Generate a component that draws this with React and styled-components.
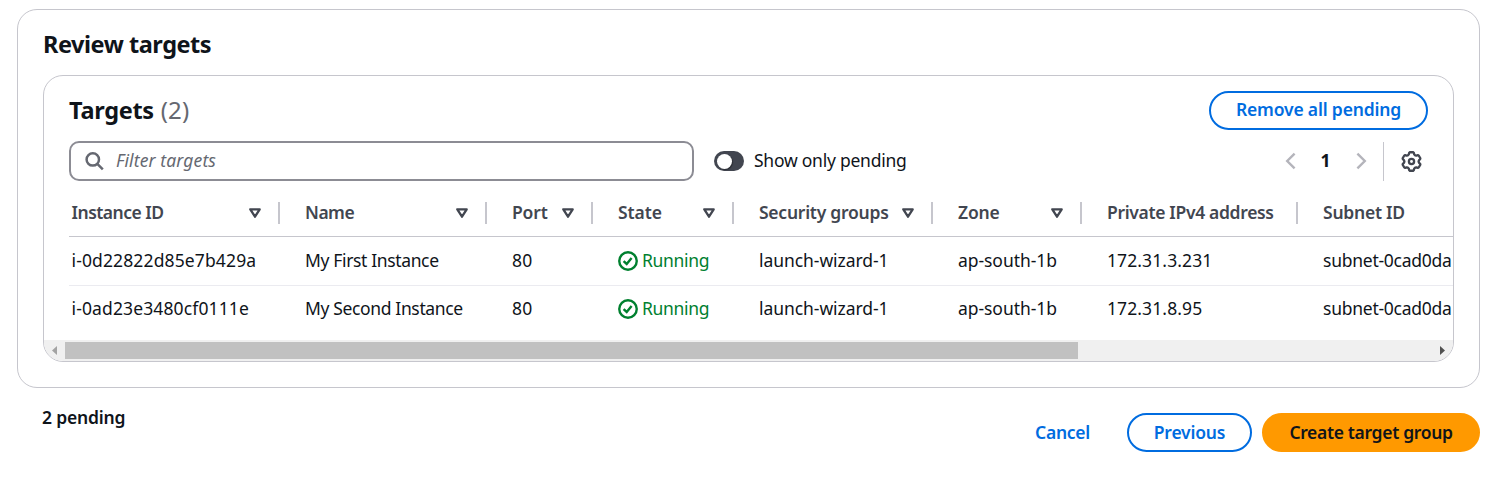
import React from "react";
import styled, { createGlobalStyle } from "styled-components";

const GlobalStyle = createGlobalStyle`
  * { box-sizing: border-box; }
  body {
    margin: 0;
    background: #fff;
    color: #0f141a;
    font: 400 17.5px/25px "Noto Sans", sans-serif;
    overflow: hidden;
  }
  button { font-family: inherit; cursor: pointer; }
`;

const Page = styled.main`
  padding: 9px 16px 0 17px;
`;

const Text = styled.span`
  letter-spacing: ${(p) => p.$tracking || 0}px;
  white-space: nowrap;
`;

const Container = styled.section`
  height: 379px;
  padding: 19px 25px 0;
  border: 1px solid #c6c6cd;
  border-radius: 20px;
`;

const Heading = styled.h2`
  margin: 0;
  font-size: 23.5px;
  font-weight: 700;
  line-height: 30px;
  letter-spacing: ${(p) => p.$tracking}px;
`;

const Panel = styled.div`
  display: flex;
  flex-direction: column;
  height: 287px;
  margin-top: 16px;
  border: 1px solid #c6c6cd;
  border-radius: 20px;
  overflow: hidden;
`;

const PanelHeader = styled.header`
  display: flex;
  align-items: center;
  justify-content: space-between;
  height: 39px;
  margin: 15px 25px 0;
  ${Heading} { padding-bottom: 2px; }
`;

const Counter = styled.span`
  margin-left: 7px;
  color: #656871;
  font-size: 24px;
  font-weight: 400;
  letter-spacing: 0.1px;
`;

const Button = styled.button`
  width: ${(p) => p.$width}px;
  height: 39px;
  padding: 0 0 ${(p) => (p.$primary || p.$low ? 0 : 2)}px;
  border: 2px solid ${(p) => (p.$primary ? "#ff9900" : "#006ce0")};
  border-radius: 20px;
  background: ${(p) => (p.$primary ? "#ff9900" : "#fff")};
  color: ${(p) => (p.$primary ? "#0f141a" : "#006ce0")};
  font-size: 17.5px;
  font-weight: 600;
  line-height: 25px;
`;

const LinkButton = styled.button`
  padding: 0 27px;
  border: 0;
  background: none;
  color: #006ce0;
  font-size: 17.5px;
  font-weight: 600;
  line-height: 25px;
`;

const Tools = styled.div`
  display: flex;
  align-items: center;
  height: 40px;
  margin: 11px 25px 0;
`;

const Search = styled.label`
  display: flex;
  align-items: center;
  gap: 11px;
  width: 625px;
  height: 40px;
  padding-left: 14px;
  border: 2px solid #8c8c94;
  border-radius: 10px;
  color: #656871;
  font-style: italic;
  ${Text} { padding-bottom: 1px; }
`;

const ToggleField = styled.label`
  display: flex;
  align-items: center;
  gap: 10px;
  margin-left: 20px;
  ${Text} { padding-bottom: 2px; }
`;

const Switch = styled.span`
  width: 30px;
  height: 20px;
  padding: 2.5px;
  border-radius: 10px;
  background: #424650;
`;

const Knob = styled.span`
  display: block;
  width: 15px;
  height: 15px;
  border-radius: 50%;
  background: #fff;
  box-shadow: 1px 1px 1px rgba(0, 0, 0, 0.35);
`;

const Pagination = styled.nav`
  display: flex;
  align-items: center;
  justify-content: space-between;
  width: 82px;
  margin-left: auto;
  font-weight: 700;
  color: #b4b4bb;
`;

const CurrentPage = styled.span`
  padding: 0 1px 1px 0;
  color: #0f141a;
`;

const Preferences = styled.div`
  display: flex;
  align-items: center;
  justify-content: flex-end;
  width: 45px;
  height: 39px;
  margin-left: 16px;
  padding-right: 6px;
  border-left: 1px solid #c6c6cd;
  color: #424650;
`;

const Table = styled.div`
  flex: 1;
  margin: 8px 0 0 25px;
`;

const Row = styled.div`
  display: grid;
  grid-template-columns: 211px 207px 106px 141px 199px 149px 216px 156px;
  align-items: center;
  height: ${(p) => p.$height}px;
  border-bottom: 1px solid ${(p) => p.$line || "transparent"};
`;

const Cell = styled.div`
  display: flex;
  align-items: center;
  gap: 5px;
  padding-left: 25px;
  overflow: hidden;
  ${Text} { padding-bottom: 1px; }
  &:first-child { padding-left: 2.5px; }
  &:last-child { margin-right: 2px; }
`;

const HeaderCell = styled(Cell)`
  justify-content: space-between;
  height: 22px;
  padding-right: 17px;
  border-right: 2px solid #c6c6cd;
  color: #424650;
  font-weight: 600;
  ${Text} { padding-bottom: 0; }
  &:last-child { border-right: 0; }
`;

const Status = styled.span`
  display: flex;
  align-items: center;
  gap: 4px;
  color: #00802f;
`;

const ScrollTrack = styled.div`
  display: flex;
  align-items: center;
  height: 21px;
  background: #f0f0f0;
`;

const ScrollArrow = styled.svg`
  width: 21px;
  height: 21px;
  fill: ${(p) => (p.$dim ? "#a3a3a3" : "#505050")};
`;

const ScrollThumb = styled.div`
  width: 1013px;
  height: 17px;
  margin-right: auto;
  background: #c1c1c1;
`;

const Footer = styled.footer`
  display: flex;
  justify-content: space-between;
  padding: 17px 0 0 25px;
`;

const Pending = styled.strong`
  font-weight: 600;
`;

const Actions = styled.div`
  display: flex;
  gap: 10px;
  padding-top: 8px;
`;

const SearchIcon = () => (
  <svg width="20" height="20" viewBox="0 0 20 20" fill="none" stroke="#656871" strokeWidth="2.5">
    <circle cx="7.8" cy="8.4" r="6.2" />
    <path d="M12.3 12.9 17.8 18.4" />
  </svg>
);

const SortIcon = () => (
  <svg width="12" height="10" viewBox="0 0 12 10" fill="none" stroke="#424650" strokeWidth="2.3" strokeLinejoin="round">
    <path d="M1.3 1.3h9.4L6 8.7Z" />
  </svg>
);

const ChevronIcon = ({ d }) => (
  <svg width="11" height="18" viewBox="0 0 11 18" fill="none" stroke="currentColor" strokeWidth="2.4">
    <path d={d} />
  </svg>
);

const CheckIcon = () => (
  <svg width="20" height="20" viewBox="0 0 20 20" fill="none" stroke="currentColor" strokeWidth="2.4">
    <circle cx="10" cy="10" r="8.75" />
    <path d="m5.6 10.1 3.1 2.9 4.9-5.9" />
  </svg>
);

// Six rounded teeth: each tooth is given by [angle offset, radius] pairs.
const tooth = [[-30, 7.1], [-20, 7.7], [-15, 9], [-10, 9.4], [10, 9.4], [15, 9], [20, 7.7]];
const gearOutline = [0, 60, 120, 180, 240, 300]
  .flatMap((base) =>
    tooth.map(([offset, radius]) => {
      const angle = ((base + offset - 90) * Math.PI) / 180;
      return `${(10.5 + radius * Math.cos(angle)).toFixed(2)},${(10.5 + radius * Math.sin(angle)).toFixed(2)}`;
    })
  )
  .join(" ");

const GearIcon = () => (
  <svg width="21" height="21" viewBox="0 0 21 21" fill="none" stroke="currentColor" strokeWidth="2.3" strokeLinejoin="round">
    <polygon points={gearOutline} />
    <circle cx="10.5" cy="10.5" r="2.6" />
  </svg>
);

const columns = [
  { label: "Instance ID", tracking: -0.5, sortable: true },
  { label: "Name", tracking: -0.5, sortable: true },
  { label: "Port", tracking: -0.15, sortable: true },
  { label: "State", tracking: -0.1, sortable: true },
  { label: "Security groups", tracking: -0.25, sortable: true },
  { label: "Zone", tracking: -0.2, sortable: true },
  { label: "Private IPv4 address", tracking: -0.33 },
  { label: "Subnet ID", tracking: -0.24 },
];

const targets = [
  { id: "i-0d22822d85e7b429a", name: "My First Instance", ip: "172.31.3.231" },
  { id: "i-0ad23e3480cf0111e", name: "My Second Instance", ip: "172.31.8.95" },
];

export default function App() {
  return (
    <>
      <GlobalStyle />
      <Page>
        <Container>
          <Heading $tracking={-0.46}>Review targets</Heading>
          <Panel>
            <PanelHeader>
              <Heading $tracking={-0.3}>
                Targets<Counter>(2)</Counter>
              </Heading>
              <Button $width={219}>
                <Text $tracking={-0.17}>Remove all pending</Text>
              </Button>
            </PanelHeader>
            <Tools>
              <Search>
                <SearchIcon />
                <Text $tracking={0.13}>Filter targets</Text>
              </Search>
              <ToggleField>
                <Switch><Knob /></Switch>
                <Text $tracking={-0.24}>Show only pending</Text>
              </ToggleField>
              <Pagination>
                <ChevronIcon d="M9.6 1.6 2.2 9l7.4 7.4" />
                <CurrentPage>1</CurrentPage>
                <ChevronIcon d="M1.4 1.6 8.8 9l-7.4 7.4" />
              </Pagination>
              <Preferences>
                <GearIcon />
              </Preferences>
            </Tools>
            <Table>
              <Row $height={48} $line="#c6c6cd">
                {columns.map((c) => (
                  <HeaderCell key={c.label}>
                    <Text $tracking={c.tracking}>{c.label}</Text>
                    {c.sortable && <SortIcon />}
                  </HeaderCell>
                ))}
              </Row>
              {targets.map((t, i) => (
                <Row key={t.id} $height={i === 0 ? 49 : 47} $line={i === 0 ? "#ebebf0" : undefined}>
                  <Cell><Text $tracking={0.13}>{t.id}</Text></Cell>
                  <Cell><Text $tracking={-0.36}>{t.name}</Text></Cell>
                  <Cell><Text $tracking={0.3}>80</Text></Cell>
                  <Cell>
                    <Status>
                      <CheckIcon />
                      <Text $tracking={-0.32}>Running</Text>
                    </Status>
                  </Cell>
                  <Cell><Text $tracking={-0.06}>launch-wizard-1</Text></Cell>
                  <Cell><Text $tracking={-0.06}>ap-south-1b</Text></Cell>
                  <Cell><Text $tracking={0.1}>{t.ip}</Text></Cell>
                  <Cell><Text $tracking={-0.25}>subnet-0cad0da</Text></Cell>
                </Row>
              ))}
            </Table>
            <ScrollTrack>
              <ScrollArrow $dim viewBox="0 0 21 21"><path d="M13 6v9l-5-4.5Z" /></ScrollArrow>
              <ScrollThumb />
              <ScrollArrow viewBox="0 0 21 21"><path d="M8 6v9l5-4.5Z" /></ScrollArrow>
            </ScrollTrack>
          </Panel>
        </Container>
        <Footer>
          <Pending><Text $tracking={-0.2}>2 pending</Text></Pending>
          <Actions>
            <LinkButton><Text $tracking={-0.27}>Cancel</Text></LinkButton>
            <Button $low $width={125}><Text $tracking={-0.2}>Previous</Text></Button>
            <Button $primary $width={218}><Text $tracking={-0.33}>Create target group</Text></Button>
          </Actions>
        </Footer>
      </Page>
    </>
  );
}
